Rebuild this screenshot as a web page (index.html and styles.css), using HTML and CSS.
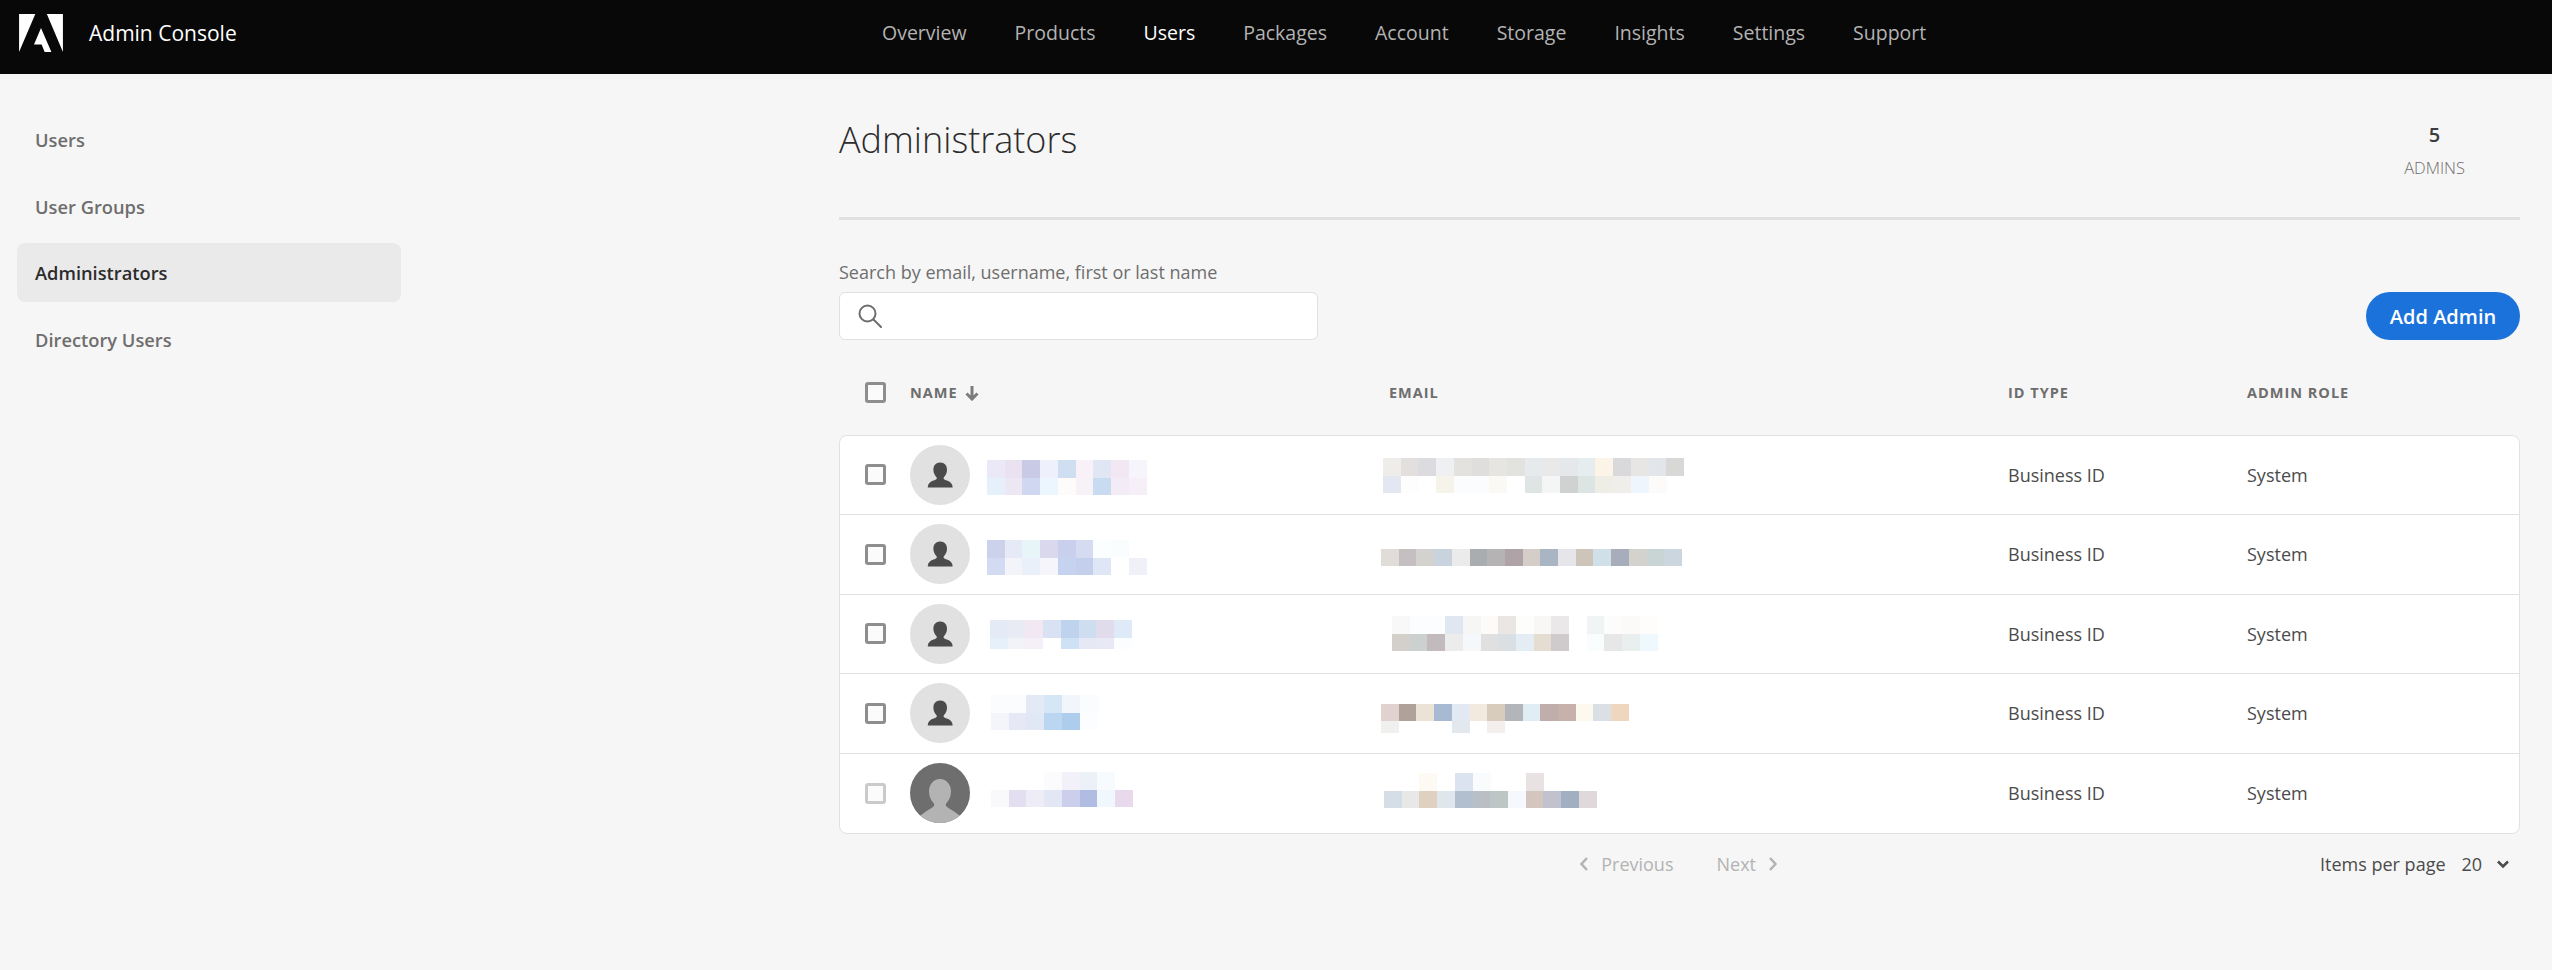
FILE: index.html
```html
<!DOCTYPE html>
<html lang="en">
<head>
<meta charset="utf-8">
<title>Admin Console</title>
<link rel="stylesheet" href="styles.css">
</head>
<body>
<header class="topbar">
  <div class="brand">
    <svg class="logo" viewBox="0 0 30 26"><path fill="#fff" d="M19 0h11v26zM11.1 0H0v26zM15 9.6L22.1 26h-4.6l-2.1-5.2h-5.2z"/></svg>
    <span class="brand-name">Admin Console</span>
  </div>
  <nav class="topnav">
    <a>Overview</a>
    <a>Products</a>
    <a class="current">Users</a>
    <a>Packages</a>
    <a>Account</a>
    <a>Storage</a>
    <a>Insights</a>
    <a>Settings</a>
    <a>Support</a>
  </nav>
</header>

<div class="page">
  <aside class="sidebar">
    <a>Users</a>
    <a>User Groups</a>
    <a class="current">Administrators</a>
    <a>Directory Users</a>
  </aside>

  <main class="content">
    <div class="title-row">
      <h1>Administrators</h1>
      <div class="stat">
        <strong>5</strong>
        <span>ADMINS</span>
      </div>
    </div>

    <div class="toolbar">
      <div class="search">
        <label>Search by email, username, first or last name</label>
        <div class="search-box">
          <svg class="search-icon" viewBox="0 0 24 24"><circle cx="9.5" cy="9.5" r="8" fill="none" stroke="#6e6e6e" stroke-width="2"/><path d="M15.5 15.5L23 23" stroke="#6e6e6e" stroke-width="2" stroke-linecap="round"/></svg>
        </div>
      </div>
      <button class="add-btn">Add Admin</button>
    </div>

    <div class="row table-head">
      <span class="check"></span>
      <span class="sort">NAME <svg viewBox="0 0 16 16"><path d="M8 1v13M2.5 8.5L8 14l5.5-5.5" fill="none" stroke="#7c7c7c" stroke-width="3"/></svg></span>
      <span>EMAIL</span>
      <span>ID TYPE</span>
      <span>ADMIN ROLE</span>
    </div>

    <div class="table">
      <!-- names and emails are pixelated in the source, one strip per row of blocks -->
      <div class="row">
        <span class="check"></span>
        <div class="who">
          <svg class="avatar" viewBox="0 0 60 60"><use href="#person"/></svg>
          <svg class="blur" viewBox="0 0 170 60">
            <g transform="translate(0 14.5) scale(17.7 18)"><rect fill="#ebe9f7"/><rect x="1" fill="#ebe2f1"/><rect x="2" fill="#c9cbe6"/><rect x="3" fill="#eef1fb"/><rect x="4" fill="#cfdef1"/><rect x="5" fill="#f8f1f7"/><rect x="6" fill="#e1e6f5"/><rect x="7" fill="#f1e8f3"/><rect x="8" fill="#f7f5fc"/></g>
            <g transform="translate(0 32.5) scale(17.7 17)"><rect fill="#e5f0fb"/><rect x="1" fill="#ede7f3"/><rect x="2" fill="#d0d8f1"/><rect x="3" fill="#ecf6fe"/><rect x="4" fill="#fefcfb"/><rect x="5" fill="#f7f2f7"/><rect x="6" fill="#c9dbf1"/><rect x="7" fill="#f3ebf6"/><rect x="8" fill="#f7eff8"/></g>
          </svg>
        </div>
        <svg class="blur mail" viewBox="0 0 310 60">
          <g transform="translate(2 12.5) scale(17.7 18)"><rect fill="#efedea"/><rect x="1" fill="#e3dfdf"/><rect x="2" fill="#dcdbe0"/><rect x="3" fill="#eff0f2"/><rect x="4" fill="#e4e2df"/><rect x="5" fill="#dfdedc"/><rect x="6" fill="#e6e5e1"/><rect x="7" fill="#e2e2de"/><rect x="8" fill="#e7eaec"/><rect x="9" fill="#e8e9e8"/><rect x="10" fill="#e5e8eb"/><rect x="11" fill="#e5edef"/><rect x="12" fill="#fdf4e8"/><rect x="13" fill="#d9d8db"/><rect x="14" fill="#e7e6e5"/><rect x="15" fill="#e2e5ea"/><rect x="16" fill="#d8d8d7"/></g>
          <g transform="translate(2 30.5) scale(17.7 17)"><rect fill="#e2e7f2"/><rect x="1" fill="#fdfdfd"/><rect x="3" fill="#f6f3ea"/><rect x="4" fill="#fafcfd"/><rect x="5" fill="#fafcfe"/><rect x="6" fill="#fbf9f3"/><rect x="8" fill="#dfe5e4"/><rect x="9" fill="#f4f6f6"/><rect x="10" fill="#d0d1d1"/><rect x="11" fill="#dde5e4"/><rect x="12" fill="#eeeee6"/><rect x="13" fill="#efeeea"/><rect x="14" fill="#eff5fc"/><rect x="15" fill="#fdfbf9"/></g>
        </svg>
        <span>Business ID</span>
        <span>System</span>
      </div>

      <div class="row">
        <span class="check"></span>
        <div class="who">
          <svg class="avatar" viewBox="0 0 60 60"><use href="#person"/></svg>
          <svg class="blur" viewBox="0 0 170 60">
            <g transform="translate(0 16) scale(17.7 18)"><rect fill="#ccd1ec"/><rect x="1" fill="#e6eaf7"/><rect x="2" fill="#e8f5f8"/><rect x="3" fill="#d9d8ec"/><rect x="4" fill="#c9d0ee"/><rect x="5" fill="#d5dcf2"/><rect x="6" fill="#fbfefe"/><rect x="7" fill="#fafdfd"/></g>
            <g transform="translate(0 34) scale(17.7 17)"><rect fill="#d3dbf3"/><rect x="1" fill="#f3f4f9"/><rect x="2" fill="#e9f0fa"/><rect x="3" fill="#f7f5fc"/><rect x="4" fill="#c6d3f0"/><rect x="5" fill="#c3cfeb"/><rect x="6" fill="#dfe7f6"/><rect x="8" fill="#eff0f8"/></g>
          </svg>
        </div>
        <svg class="blur mail" viewBox="0 0 310 60">
          <g transform="translate(0 25) scale(17.7 17)"><rect fill="#e0dcd8"/><rect x="1" fill="#c5bfc2"/><rect x="2" fill="#d3d2ce"/><rect x="3" fill="#c9d3dd"/><rect x="4" fill="#ebebeb"/><rect x="5" fill="#a9adaf"/><rect x="6" fill="#b5b3b3"/><rect x="7" fill="#b0a3a7"/><rect x="8" fill="#d5cdc8"/><rect x="9" fill="#a9b5c3"/><rect x="10" fill="#e6e6ea"/><rect x="11" fill="#cdc4ba"/><rect x="12" fill="#d0e0e8"/><rect x="13" fill="#a7adbb"/><rect x="14" fill="#d3d2cc"/><rect x="15" fill="#c9d4d5"/><rect x="16" fill="#ccd6de"/></g>
        </svg>
        <span>Business ID</span>
        <span>System</span>
      </div>

      <div class="row">
        <span class="check"></span>
        <div class="who">
          <svg class="avatar" viewBox="0 0 60 60"><use href="#person"/></svg>
          <svg class="blur" viewBox="0 0 170 60">
            <g transform="translate(3 15.5) scale(17.7 18)"><rect fill="#e4eaf6"/><rect x="1" fill="#e9ebf4"/><rect x="2" fill="#f1e8f1"/><rect x="3" fill="#d8e2f3"/><rect x="4" fill="#bfd3ef"/><rect x="5" fill="#cfddf1"/><rect x="6" fill="#e0dcec"/><rect x="7" fill="#dfeaf8"/></g>
            <g transform="translate(3 33.5) scale(17.7 11)"><rect fill="#e6f0fa"/><rect x="1" fill="#f1f3f8"/><rect x="2" fill="#f5f0f7"/><rect x="4" fill="#cfe1f5"/><rect x="5" fill="#e6e9f5"/><rect x="6" fill="#e8e9f4"/><rect x="7" fill="#fbfdfe"/></g>
          </svg>
        </div>
        <svg class="blur mail" viewBox="0 0 310 60">
          <g transform="translate(11 11.5) scale(17.7 18)"><rect fill="#f8f8f8"/><rect x="1" fill="#fcfdfe"/><rect x="2" fill="#fcfdfe"/><rect x="3" fill="#e1e7f0"/><rect x="4" fill="#f6f6f6"/><rect x="5" fill="#fcfbfa"/><rect x="6" fill="#e9e6e3"/><rect x="7" fill="#fdfdfc"/><rect x="8" fill="#f9f7f5"/><rect x="9" fill="#eae8e9"/><rect x="11" fill="#f1f4f4"/><rect x="12" fill="#fcfcfc"/><rect x="13" fill="#fbfaf9"/><rect x="14" fill="#fefdfc"/></g>
          <g transform="translate(11 29.5) scale(17.7 17)"><rect fill="#d3cfca"/><rect x="1" fill="#ccd0cf"/><rect x="2" fill="#c2babc"/><rect x="3" fill="#ececec"/><rect x="4" fill="#f5f8fa"/><rect x="5" fill="#dfe0df"/><rect x="6" fill="#dadfe3"/><rect x="7" fill="#e4ecf4"/><rect x="8" fill="#e5ddd2"/><rect x="9" fill="#cfcbcc"/><rect x="11" fill="#f9fdfe"/><rect x="12" fill="#e7e7e8"/><rect x="13" fill="#e9eeee"/><rect x="14" fill="#eff8fd"/></g>
        </svg>
        <span>Business ID</span>
        <span>System</span>
      </div>

      <div class="row">
        <span class="check"></span>
        <div class="who">
          <svg class="avatar" viewBox="0 0 60 60"><use href="#person"/></svg>
          <svg class="blur" viewBox="0 0 170 60">
            <g transform="translate(4 12) scale(17.7 18)"><rect fill="#fbfcfe"/><rect x="1" fill="#fbfcfe"/><rect x="2" fill="#e3e9f5"/><rect x="3" fill="#d5e6f4"/><rect x="4" fill="#f2f5fb"/><rect x="5" fill="#fbfcfe"/></g>
            <g transform="translate(4 30) scale(17.7 17)"><rect fill="#f3f5fa"/><rect x="1" fill="#e6e9f5"/><rect x="2" fill="#dfe8f4"/><rect x="3" fill="#bad6f0"/><rect x="4" fill="#aeccec"/><rect x="5" fill="#fcfdfe"/></g>
          </svg>
        </div>
        <svg class="blur mail" viewBox="0 0 310 60">
          <g transform="translate(0 21) scale(17.7 17)"><rect fill="#e2d2cf"/><rect x="1" fill="#b1a19b"/><rect x="2" fill="#ebe3d6"/><rect x="3" fill="#a8b9d3"/><rect x="4" fill="#e2e9f3"/><rect x="5" fill="#f3eadf"/><rect x="6" fill="#d8ccbc"/><rect x="7" fill="#b3b5bb"/><rect x="8" fill="#e0edf5"/><rect x="9" fill="#bfaeac"/><rect x="10" fill="#c6b2ab"/><rect x="11" fill="#fdf9ef"/><rect x="12" fill="#dbdfe6"/><rect x="13" fill="#efd7bf"/></g>
          <g transform="translate(0 38) scale(17.7 12)"><rect fill="#f0f0ef"/><rect x="4" fill="#e3e8ef"/><rect x="6" fill="#f4eeec"/></g>
        </svg>
        <span>Business ID</span>
        <span>System</span>
      </div>

      <div class="row">
        <span class="check disabled"></span>
        <div class="who">
          <svg class="avatar" viewBox="0 0 60 60"><use href="#photo"/></svg>
          <svg class="blur" viewBox="0 0 170 60">
            <g transform="translate(4 8.5) scale(17.7 18)"><rect x="3" fill="#fbfafc"/><rect x="4" fill="#f2f0f8"/><rect x="5" fill="#ecf1f7"/><rect x="6" fill="#f7fbfe"/></g>
            <g transform="translate(4 26.5) scale(17.7 17)"><rect fill="#f9f8fb"/><rect x="1" fill="#e3def0"/><rect x="2" fill="#eeecf6"/><rect x="3" fill="#e3e6f4"/><rect x="4" fill="#cbcfec"/><rect x="5" fill="#b0bce2"/><rect x="6" fill="#f0f8fe"/><rect x="7" fill="#e8d9ed"/></g>
          </svg>
        </div>
        <svg class="blur mail" viewBox="0 0 310 60">
          <g transform="translate(3 9.5) scale(17.7 18)"><rect x="2" fill="#fdf9f3"/><rect x="4" fill="#dae3ef"/><rect x="5" fill="#fafbfc"/><rect x="8" fill="#e8e2e2"/></g>
          <g transform="translate(3 27.5) scale(17.7 17)"><rect fill="#d5dde7"/><rect x="1" fill="#e8e8e8"/><rect x="2" fill="#e0d0c0"/><rect x="3" fill="#dfe6ec"/><rect x="4" fill="#b2bfcf"/><rect x="5" fill="#b9bfc4"/><rect x="6" fill="#bcc6c5"/><rect x="7" fill="#f5f8fc"/><rect x="8" fill="#d5c5bf"/><rect x="9" fill="#c2c2ce"/><rect x="10" fill="#a2afc2"/><rect x="11" fill="#e0d9dc"/></g>
        </svg>
        <span>Business ID</span>
        <span>System</span>
      </div>
    </div>

    <div class="pager">
      <div class="pages">
        <a><svg class="chev" viewBox="0 0 10 16"><path d="M8 2L2.5 8L8 14"/></svg>Previous</a>
        <a>Next<svg class="chev" viewBox="0 0 10 16"><path d="M2 2L7.5 8L2 14"/></svg></a>
      </div>
      <div class="per-page">
        <span>Items per page</span>
        <span>20</span>
        <svg class="chev-down" viewBox="0 0 14 10"><path d="M2 2.5L7 7.5L12 2.5"/></svg>
      </div>
    </div>
  </main>
</div>

<!-- shared avatars -->
<svg class="defs" aria-hidden="true">
  <symbol id="person" viewBox="0 0 60 60">
    <rect width="60" height="60" fill="#e1e1e1"/>
    <path fill="#4b4b4b" d="M30 17.5c-4 0-6.6 3.100-6.600 7.200 0 3 1.200 5.600 2.900 7.200 .6 .6 .7 1.500 .2 2.100-.5 .6-1.500 1-3 1.500-3.500 1.100-5.500 3-5.800 7h25c-.3-4-2.300-5.900-5.800-7-1.500-.5-2.500-.9-3-1.500-.5-.6-.4-1.500 .2-2.100 1.700-1.600 2.900-4.200 2.900-7.200 0-4.100-2.600-7.200-6.600-7.200z"/>
  </symbol>
  <symbol id="photo" viewBox="0 0 60 60">
    <rect width="60" height="60" fill="#6e6e6e"/>
    <path fill="#b3b3b3" d="M30 16c-6.500 0-11 5.500-11 12.500 0 5 2 9 4.500 11.500 .9 1 .9 2.500 0 3.500-1.500 1.600-8 4.500-13.500 9.500v7h40v-7c-5.500-5-12-7.900-13.500-9.500-.9-1-.9-2.500 0-3.500 2.500-2.500 4.500-6.500 4.500-11.500 0-7-4.500-12.500-11-12.500z"/>
  </symbol>
</svg>
</body>
</html>
```

FILE: styles.css
```css
/* Whole window, no scrolling */
html, body {
  height: 100%;
}
body {
  margin: 0;
  overflow: hidden;
  background: #f6f6f6;
  color: #4b4b4b;
  font-family: "Open Sans", "Noto Sans", sans-serif;
  font-size: 18px;
}
a {
  color: inherit;
  text-decoration: none;
}

/* Black bar on top */
.topbar {
  display: flex;
  align-items: center;
  height: 74px;
  padding-bottom: 9px;
  box-sizing: border-box;
  background: #080808;
}
.brand {
  display: flex;
  align-items: center;
  width: 882px;
  padding-left: 19px;
  box-sizing: border-box;
}
.logo {
  width: 44px;
  height: 38px;
  margin-right: 26px;
}
.brand-name {
  color: #fff;
  font-size: 21px;
}
.topnav {
  display: flex;
  gap: 48px;
  color: #b3b3b3;
  font-size: 19.500px;
}
.topnav .current {
  color: #fff;
}

/* Two columns below the bar */
.page {
  display: flex;
}
.sidebar {
  display: flex;
  flex-direction: column;
  gap: 7.500px;
  width: 384px;
  margin: 36px 0 0 17px;
}
.sidebar a {
  display: flex;
  align-items: center;
  height: 59px;
  padding-left: 18px;
  border-radius: 8px;
  color: #6e6e6e;
  font-size: 18.300px;
  font-weight: 600;
}
.sidebar .current {
  background: #eaeaea;
  color: #2c2c2c;
}
.content {
  width: 1681px;
  margin-left: 438px;
}

/* Title and counter */
.title-row {
  display: flex;
  justify-content: space-between;
  height: 146px;
  box-sizing: border-box;
  border-bottom: 3px solid #e1e1e1;
}
h1 {
  margin: 36px 0 0;
  color: #2c2c2c;
  font-size: 36px;
  font-weight: 300;
  line-height: 60px;
}
.stat {
  display: flex;
  flex-direction: column;
  align-items: center;
  margin: 46px 55px 0 0;
}
.stat strong {
  color: #3c3c3c;
  font-size: 20px;
  font-weight: 600;
  line-height: 30px;
}
.stat span {
  margin-top: 6px;
  color: #6e6e6e;
  font-size: 16.500px;
  font-weight: 300;
  line-height: 24px;
}

/* Search and add button */
.toolbar {
  display: flex;
  justify-content: space-between;
  align-items: flex-end;
  margin-top: 39px;
}
.search label {
  display: block;
  margin-bottom: 7px;
  color: #6e6e6e;
  line-height: 26px;
}
.search-box {
  display: flex;
  align-items: center;
  width: 479px;
  height: 48px;
  padding-left: 18px;
  box-sizing: border-box;
  border: 1px solid #e1e1e1;
  border-radius: 6px;
  background: #fff;
}
.search-icon {
  width: 24px;
  height: 24px;
}
.add-btn {
  width: 154px;
  height: 48px;
  padding: 0;
  border: 0;
  border-radius: 24px;
  background: #1b72db;
  color: #fff;
  font-family: inherit;
  font-size: 20px;
  font-weight: 600;
}

/* Table grid shared by head and rows */
.row {
  display: grid;
  grid-template-columns: 70px 479px 619px 239px 1fr;
  align-items: center;
  height: 79.500px;
  box-sizing: border-box;
  border-bottom: 1px solid #e1e1e1;
}
.row:last-child {
  border-bottom: 0;
}
.table-head {
  height: 40px;
  margin-top: 32.500px;
  margin-bottom: 22px;
  padding-left: 1px;
  border-bottom: 0;
  color: #6e6e6e;
  font-size: 14.500px;
  font-weight: 700;
  letter-spacing: 1px;
}
.sort {
  display: flex;
  align-items: center;
  gap: 6px;
}
.sort svg {
  width: 16px;
  height: 16px;
}
.table {
  border: 1px solid #e1e1e1;
  border-radius: 8px;
  background: #fff;
}
.check {
  width: 21px;
  height: 21px;
  margin-left: 25px;
  box-sizing: border-box;
  border: 3px solid #8e8e8e;
  border-radius: 3px;
  background: #fbfbfb;
}
.check.disabled {
  border-color: #cacaca;
}
.who {
  display: flex;
  align-items: center;
  gap: 17px;
}
.avatar {
  width: 60px;
  height: 60px;
  border-radius: 50%;
}
.blur {
  width: 170px;
  height: 60px;
  shape-rendering: crispEdges;
}
.blur.mail {
  width: 310px;
  margin-left: -8px;
}
.blur rect {
  width: 1.020px;
  height: 1px;
}
.defs {
  position: absolute;
  width: 0;
  height: 0;
}

/* Paging under the table */
.pager {
  display: flex;
  justify-content: flex-end;
  align-items: center;
  height: 60px;
}
.pages {
  display: flex;
  gap: 43px;
  margin-right: 542px;
  color: #b3b3b3;
}
.pages a {
  display: flex;
  align-items: center;
  gap: 12px;
}
.chev {
  width: 10px;
  height: 16px;
}
.chev path, .chev-down path {
  fill: none;
  stroke: #b3b3b3;
  stroke-width: 2.500;
}
.chev-down path {
  stroke: #4b4b4b;
  stroke-width: 2.600;
}
.per-page {
  display: flex;
  align-items: center;
  width: 200px;
  color: #4b4b4b;
}
.per-page span:first-child {
  margin-right: 16px;
}
.chev-down {
  width: 14px;
  height: 10px;
  margin-left: 14px;
}
```
